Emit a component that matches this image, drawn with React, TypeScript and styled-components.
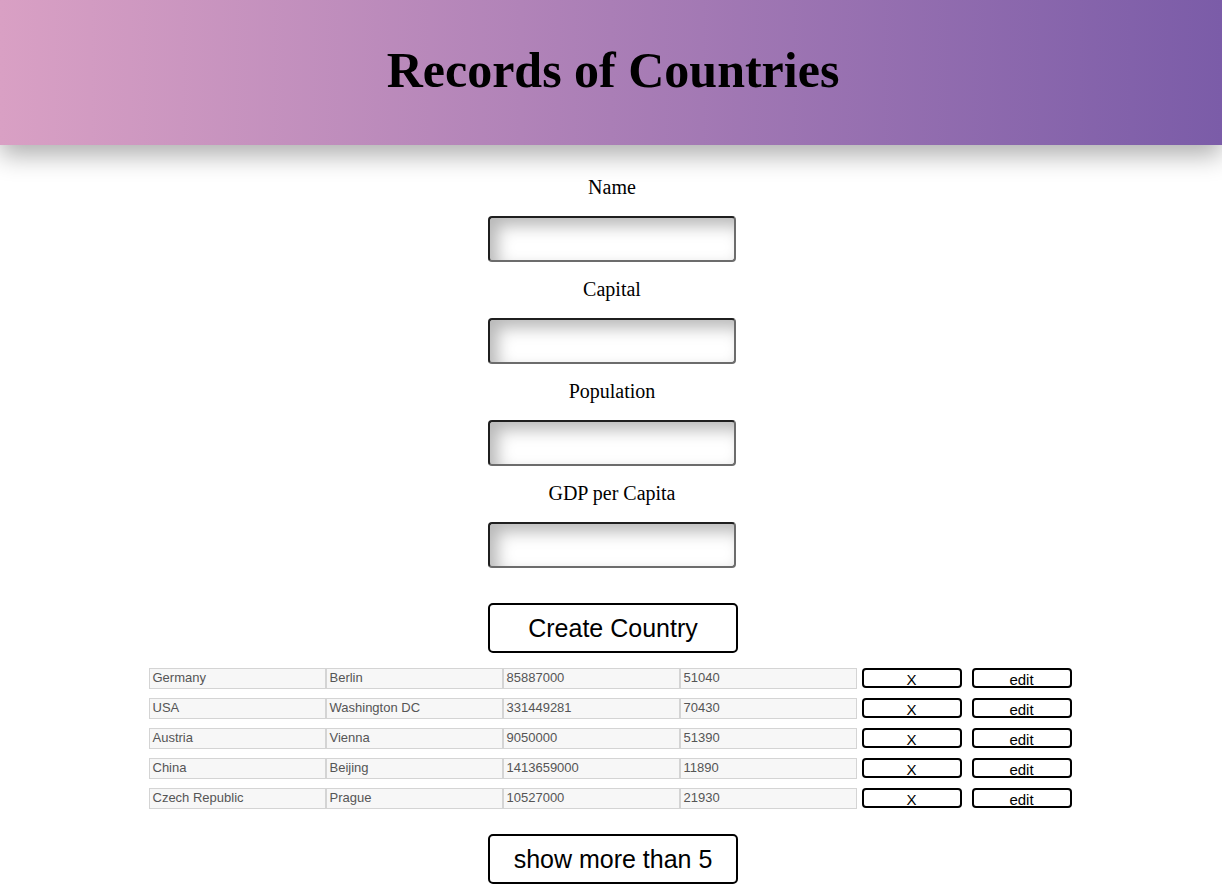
import styled, { createGlobalStyle } from 'styled-components';

const countries = [
  { name: 'Germany', capital: 'Berlin', population: '85887000', gdp: '51040' },
  { name: 'USA', capital: 'Washington DC', population: '331449281', gdp: '70430' },
  { name: 'Austria', capital: 'Vienna', population: '9050000', gdp: '51390' },
  { name: 'China', capital: 'Beijing', population: '1413659000', gdp: '11890' },
  { name: 'Czech Republic', capital: 'Prague', population: '10527000', gdp: '21930' },
];

const fields = ['Name', 'Capital', 'Population', 'GDP per Capita'];

export default function App() {
  return (
    <>
      <GlobalStyle />
      <Header>
        <Title>Records of Countries</Title>
      </Header>
      <Main>
        <Form>
          {fields.map((f) => (
            <Field key={f}>
              <Label>{f}</Label>
              <TextInput />
            </Field>
          ))}
        </Form>
        <BigButton $top={35}>Create Country</BigButton>
        <Table>
          {countries.map((c) => (
            <Row key={c.name}>
              <Cell>{c.name}</Cell>
              <Cell>{c.capital}</Cell>
              <Cell>{c.population}</Cell>
              <Cell>{c.gdp}</Cell>
              <SmallButton $first>X</SmallButton>
              <SmallButton>edit</SmallButton>
            </Row>
          ))}
        </Table>
        <BigButton>show more than 5</BigButton>
      </Main>
    </>
  );
}

const GlobalStyle = createGlobalStyle`
  body {
    margin: 0;
    background: #fff;
    font-family: "Liberation Serif", "Times New Roman", serif;
  }
`;

const Header = styled.header`
  height: 145px;
  display: flex;
  align-items: center;
  justify-content: center;
  background: linear-gradient(to right, #d9a0c4, #7b5ca8);
  box-shadow: 0 10px 24px rgba(0, 0, 0, 0.32);
  position: relative;
`;

const Title = styled.h1`
  margin: 0;
  font-family: "Liberation Serif", "Times New Roman", serif;
  font-size: 50px;
  font-weight: bold;
  color: #000;
  padding: 0 0 6px 4px;
`;

const Main = styled.main`
  display: flex;
  flex-direction: column;
  align-items: center;
  padding-top: 15px;
`;

const Form = styled.div`
  display: flex;
  flex-direction: column;
  align-items: center;
  margin-left: 2px;
`;

const Field = styled.div`
  display: flex;
  flex-direction: column;
  align-items: center;
`;

const Label = styled.label`
  font-size: 20px;
  line-height: 23px;
  margin: 16px 0 17px;
  color: #000;
`;

const TextInput = styled.input`
  box-sizing: border-box;
  width: 248px;
  height: 46px;
  border-radius: 4px;
  border-style: solid;
  border-width: 2px;
  border-color: #1f1f1f #6c6c6c #6c6c6c #1f1f1f;
  background: #fff;
  box-shadow: inset 8px 8px 16px rgba(0, 0, 0, 0.28);
  outline: none;
`;

const BigButton = styled.button<{ $top?: number }>`
  box-sizing: border-box;
  width: 250px;
  height: 50px;
  margin: ${(p) => p.$top ?? 0}px 0 0 4px;
  background: #fff;
  border: 2px solid #000;
  border-radius: 5px;
  font-family: "Liberation Sans", Arial, sans-serif;
  font-size: 25px;
  color: #000;
  padding: 0;
`;

const Table = styled.div`
  display: flex;
  flex-direction: column;
  gap: 9px;
  margin: 15px 2px 25px 0;
`;

const Row = styled.div`
  display: flex;
  align-items: flex-start;
`;

const Cell = styled.div`
  box-sizing: border-box;
  width: 177px;
  height: 21px;
  padding: 0 3px;
  border: 1px solid #d4d4d4;
  background: #f7f7f7;
  font-family: "Liberation Sans", Arial, sans-serif;
  font-size: 13px;
  line-height: 18px;
  color: #555;
  white-space: nowrap;
`;

const SmallButton = styled.button<{ $first?: boolean }>`
  box-sizing: border-box;
  width: 100px;
  height: 20px;
  margin-left: ${(p) => (p.$first ? '5px' : '10px')};
  background: #fff;
  border: 2px solid #000;
  border-radius: 4px;
  padding: 3px 0 0;
  font-family: "Liberation Sans", Arial, sans-serif;
  font-size: 15px;
  line-height: 14px;
  color: #000;
`;
